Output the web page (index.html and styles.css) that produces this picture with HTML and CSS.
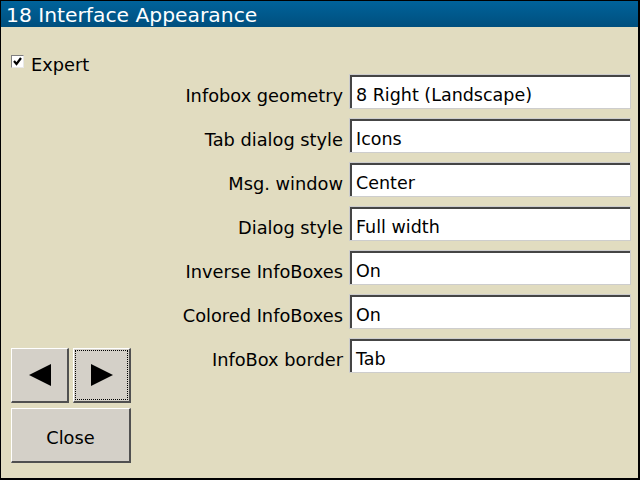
FILE: index.html
```html
<!DOCTYPE html>
<html>
<head>
<meta charset="utf-8">
<link rel="stylesheet" href="styles.css">
</head>
<body>
<div class="window">
  <div class="titlebar">18 Interface Appearance</div>
  <div class="client">
    <div class="side">
      <label class="check">
        <span class="box"><svg width="9" height="9" viewBox="0 0 9 9"><path d="M1 4 L3.5 7 L8 1" fill="none" stroke="#000" stroke-width="2.2"/></svg></span>
        <span>Expert</span>
      </label>
      <div class="buttons">
        <div class="arrows">
          <div class="btn"><svg width="22" height="22" viewBox="0 0 22 22"><polygon points="0,11 22,0 22,22" fill="#000"/></svg></div>
          <div class="btn focused"><div class="focus"><svg width="22" height="22" viewBox="0 0 22 22"><polygon points="22,11 0,0 0,22" fill="#000"/></svg></div></div>
        </div>
        <div class="btn close">Close</div>
      </div>
    </div>
    <div class="form">
      <div class="label">Infobox geometry</div><div class="field">8 Right (Landscape)</div>
      <div class="label">Tab dialog style</div><div class="field">Icons</div>
      <div class="label">Msg. window</div><div class="field">Center</div>
      <div class="label">Dialog style</div><div class="field">Full width</div>
      <div class="label">Inverse InfoBoxes</div><div class="field">On</div>
      <div class="label">Colored InfoBoxes</div><div class="field">On</div>
      <div class="label">InfoBox border</div><div class="field">Tab</div>
    </div>
  </div>
</div>
</body>
</html>
```
FILE: styles.css
```css
html, body {
  margin: 0;
  padding: 0;
  background: #000;
}
.window {
  box-sizing: border-box;
  width: 640px;
  height: 480px;
  border-style: solid;
  border-color: #000;
  border-width: 1px 2px 2px 1px;
  background: #e1dcc0;
  display: flex;
  flex-direction: column;
  font-family: "DejaVu Sans", sans-serif;
  color: #000;
}
.titlebar {
  height: 26px;
  line-height: 29px;
  overflow: hidden;
  padding-left: 5px;
  font-size: 20.3px;
  color: #fff;
  background: linear-gradient(#00639b, #004f7e);
  white-space: nowrap;
}
.client {
  flex: 1;
  display: flex;
}
.side {
  width: 134px;
  box-sizing: border-box;
  padding: 28px 0 15px 10px;
  display: flex;
  flex-direction: column;
  justify-content: space-between;
}
.check {
  display: flex;
  align-items: flex-start;
  gap: 7px;
  font-size: 17.8px;
  line-height: 20px;
}
.box {
  box-sizing: border-box;
  width: 13px;
  height: 13px;
  background: #fff;
  border-style: solid;
  border-width: 1px;
  border-color: #808080 #e8e8e8 #e8e8e8 #808080;
  display: flex;
  align-items: center;
  justify-content: center;
}
.buttons {
  display: flex;
  flex-direction: column;
  gap: 5px;
}
.arrows {
  display: flex;
  gap: 4px;
}
.btn {
  box-sizing: border-box;
  height: 55px;
  width: 58px;
  background: #d4d0c8;
  border-style: solid;
  border-width: 1px 2px 2px 1px;
  border-color: #fff #505050 #505050 #fff;
  display: flex;
  align-items: center;
  justify-content: center;
}
.focused {
  padding: 1px;
}
.focus {
  box-sizing: border-box;
  width: 100%;
  height: 100%;
  border: 1px dotted #000;
  display: flex;
  align-items: center;
  justify-content: center;
}
.close {
  width: 120px;
  font-size: 17.8px;
  padding-top: 5px;
}
.form {
  flex: 1;
  padding: 47px 7px 0 0;
  display: grid;
  grid-template-columns: 1fr 282px;
  grid-auto-rows: 35px;
  row-gap: 9px;
  column-gap: 6px;
  align-content: start;
}
.label {
  box-sizing: border-box;
  font-size: 17.8px;
  text-align: right;
  padding-top: 9px;
  line-height: 26px;
  white-space: nowrap;
}
.field {
  box-sizing: border-box;
  background: #fff;
  border: 1px solid #cdcdcd;
  box-shadow: inset 2px 2px 0 #454545;
  padding: 8px 0 0 6px;
  font-size: 17.5px;
  line-height: 25px;
  white-space: nowrap;
}
```
